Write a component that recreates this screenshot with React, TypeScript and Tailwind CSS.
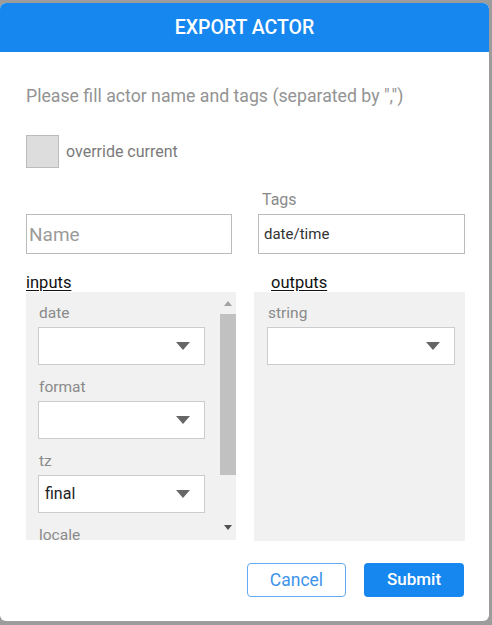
import React from 'react';

type Field = { label: string; value?: string };

const inputFields: Field[] = [
  { label: 'date' },
  { label: 'format' },
  { label: 'tz', value: 'final' },
  { label: 'locale' },
];

const outputFields: Field[] = [{ label: 'string' }];

function Caret() {
  return (
    <svg width="14" height="8" viewBox="0 0 14 8" className="shrink-0">
      <path d="M0 0 L14 0 L7 8 Z" fill="#666666" />
    </svg>
  );
}

function SelectBox({ value, width }: { value?: string; width: string }) {
  return (
    <div
      className={`${width} h-[38px] bg-white border border-[#cccccc] flex items-center justify-between pl-[6px] pr-[14px]`}
    >
      <span className="text-[16px] text-[#222222]">{value ?? ''}</span>
      <Caret />
    </div>
  );
}

function FieldList({ fields, pad, width }: { fields: Field[]; pad: string; width: string }) {
  return (
    <div className={`flex flex-col pt-[12px] ${pad}`}>
      {fields.map((f) => (
        <div key={f.label} className="flex flex-col mb-[13px]">
          <span className="text-[15.5px] leading-[18px] text-[#8a8a8a] ml-[1px] mb-[5px]">{f.label}</span>
          <SelectBox value={f.value} width={width} />
        </div>
      ))}
    </div>
  );
}

export default function App() {
  return (
    <div
      className="w-[492px] h-[625px] bg-[#9c9c9c] pt-[3px] pr-[3px] pb-[4px] overflow-hidden"
      style={{ fontFamily: 'Roboto, "Liberation Sans", sans-serif' }}
    >
      <div className="h-full bg-white rounded-[6px] overflow-hidden flex flex-col">
        <header className="h-[49px] bg-[#1787f0] flex items-center justify-center shrink-0">
          <h1 className="text-[19.5px] font-medium text-white">EXPORT ACTOR</h1>
        </header>

        <div className="flex flex-col pl-[26px] pr-[20px]">
          <p className="mt-[33px] text-[17.7px] leading-[22px] text-[#939393] whitespace-nowrap">
            Please fill actor name and tags (separated by ",")
          </p>

          <label className="mt-[28px] flex items-center gap-[7px]">
            <span className="w-[33px] h-[33px] bg-[#dddddd] border border-[#bbbbbb]" />
            <span className="text-[16px] text-[#7a7a7a]">override current</span>
          </label>

          <div className="flex mt-[23px]">
            <div className="w-[228px] flex flex-col">
              <span className="h-[18px] mb-[5px]" />
              <input
                placeholder="Name"
                className="w-[206px] h-[40px] border border-[#bbbbbb] px-[2px] text-[19px] text-[#222222] placeholder:text-[#9a9a9a] outline-none"
              />
            </div>
            <div className="flex flex-col">
              <span className="h-[18px] mb-[5px] ml-[8px] text-[16px] leading-[18px] text-[#8a8a8a]">Tags</span>
              <input
                defaultValue="date/time"
                className="ml-[4px] w-[207px] h-[40px] border border-[#bbbbbb] px-[5px] text-[15px] text-[#333333] outline-none"
              />
            </div>
          </div>

          <div className="flex mt-[19px]">
            <div className="w-[210px] shrink-0 flex flex-col">
              <span className="h-[19px] text-[16.5px] leading-[19px] text-[#111111] underline underline-offset-[2px]">inputs</span>
              <div className="h-[248px] bg-[#f1f1f1] flex overflow-hidden">
                <div className="flex-1 overflow-hidden">
                  <FieldList fields={inputFields} pad="pl-[12px]" width="w-[167px]" />
                </div>
                <div className="w-[17px] flex flex-col items-center pt-[9px]">
                  <svg width="8" height="5" viewBox="0 0 8 5">
                    <path d="M0 5 L8 5 L4 0 Z" fill="#a3a3a3" />
                  </svg>
                  <div className="mt-[8px] w-[16px] h-[161px] bg-[#c1c1c1]" />
                  <svg width="8" height="5" viewBox="0 0 8 5" className="mt-[50px]">
                    <path d="M0 0 L8 0 L4 5 Z" fill="#505050" />
                  </svg>
                </div>
              </div>
            </div>
            <div className="ml-[18px] w-[211px] shrink-0 flex flex-col">
              <span className="h-[19px] ml-[17px] text-[16.5px] leading-[19px] text-[#111111] underline underline-offset-[2px]">outputs</span>
              <div className="h-[249px] bg-[#f1f1f1]">
                <FieldList fields={outputFields} pad="pl-[13px]" width="w-[188px]" />
              </div>
            </div>
          </div>

          <div className="flex justify-end gap-[18px] mt-[22px] mr-[5px]">
            <button className="w-[99px] h-[34px] rounded-[4px] border border-[#62abf2] bg-white text-[17.5px] text-[#3d93ea]">
              Cancel
            </button>
            <button className="w-[100px] h-[34px] rounded-[4px] bg-[#1787f0] text-[17px] font-medium text-white">
              Submit
            </button>
          </div>
        </div>
      </div>
    </div>
  );
}
